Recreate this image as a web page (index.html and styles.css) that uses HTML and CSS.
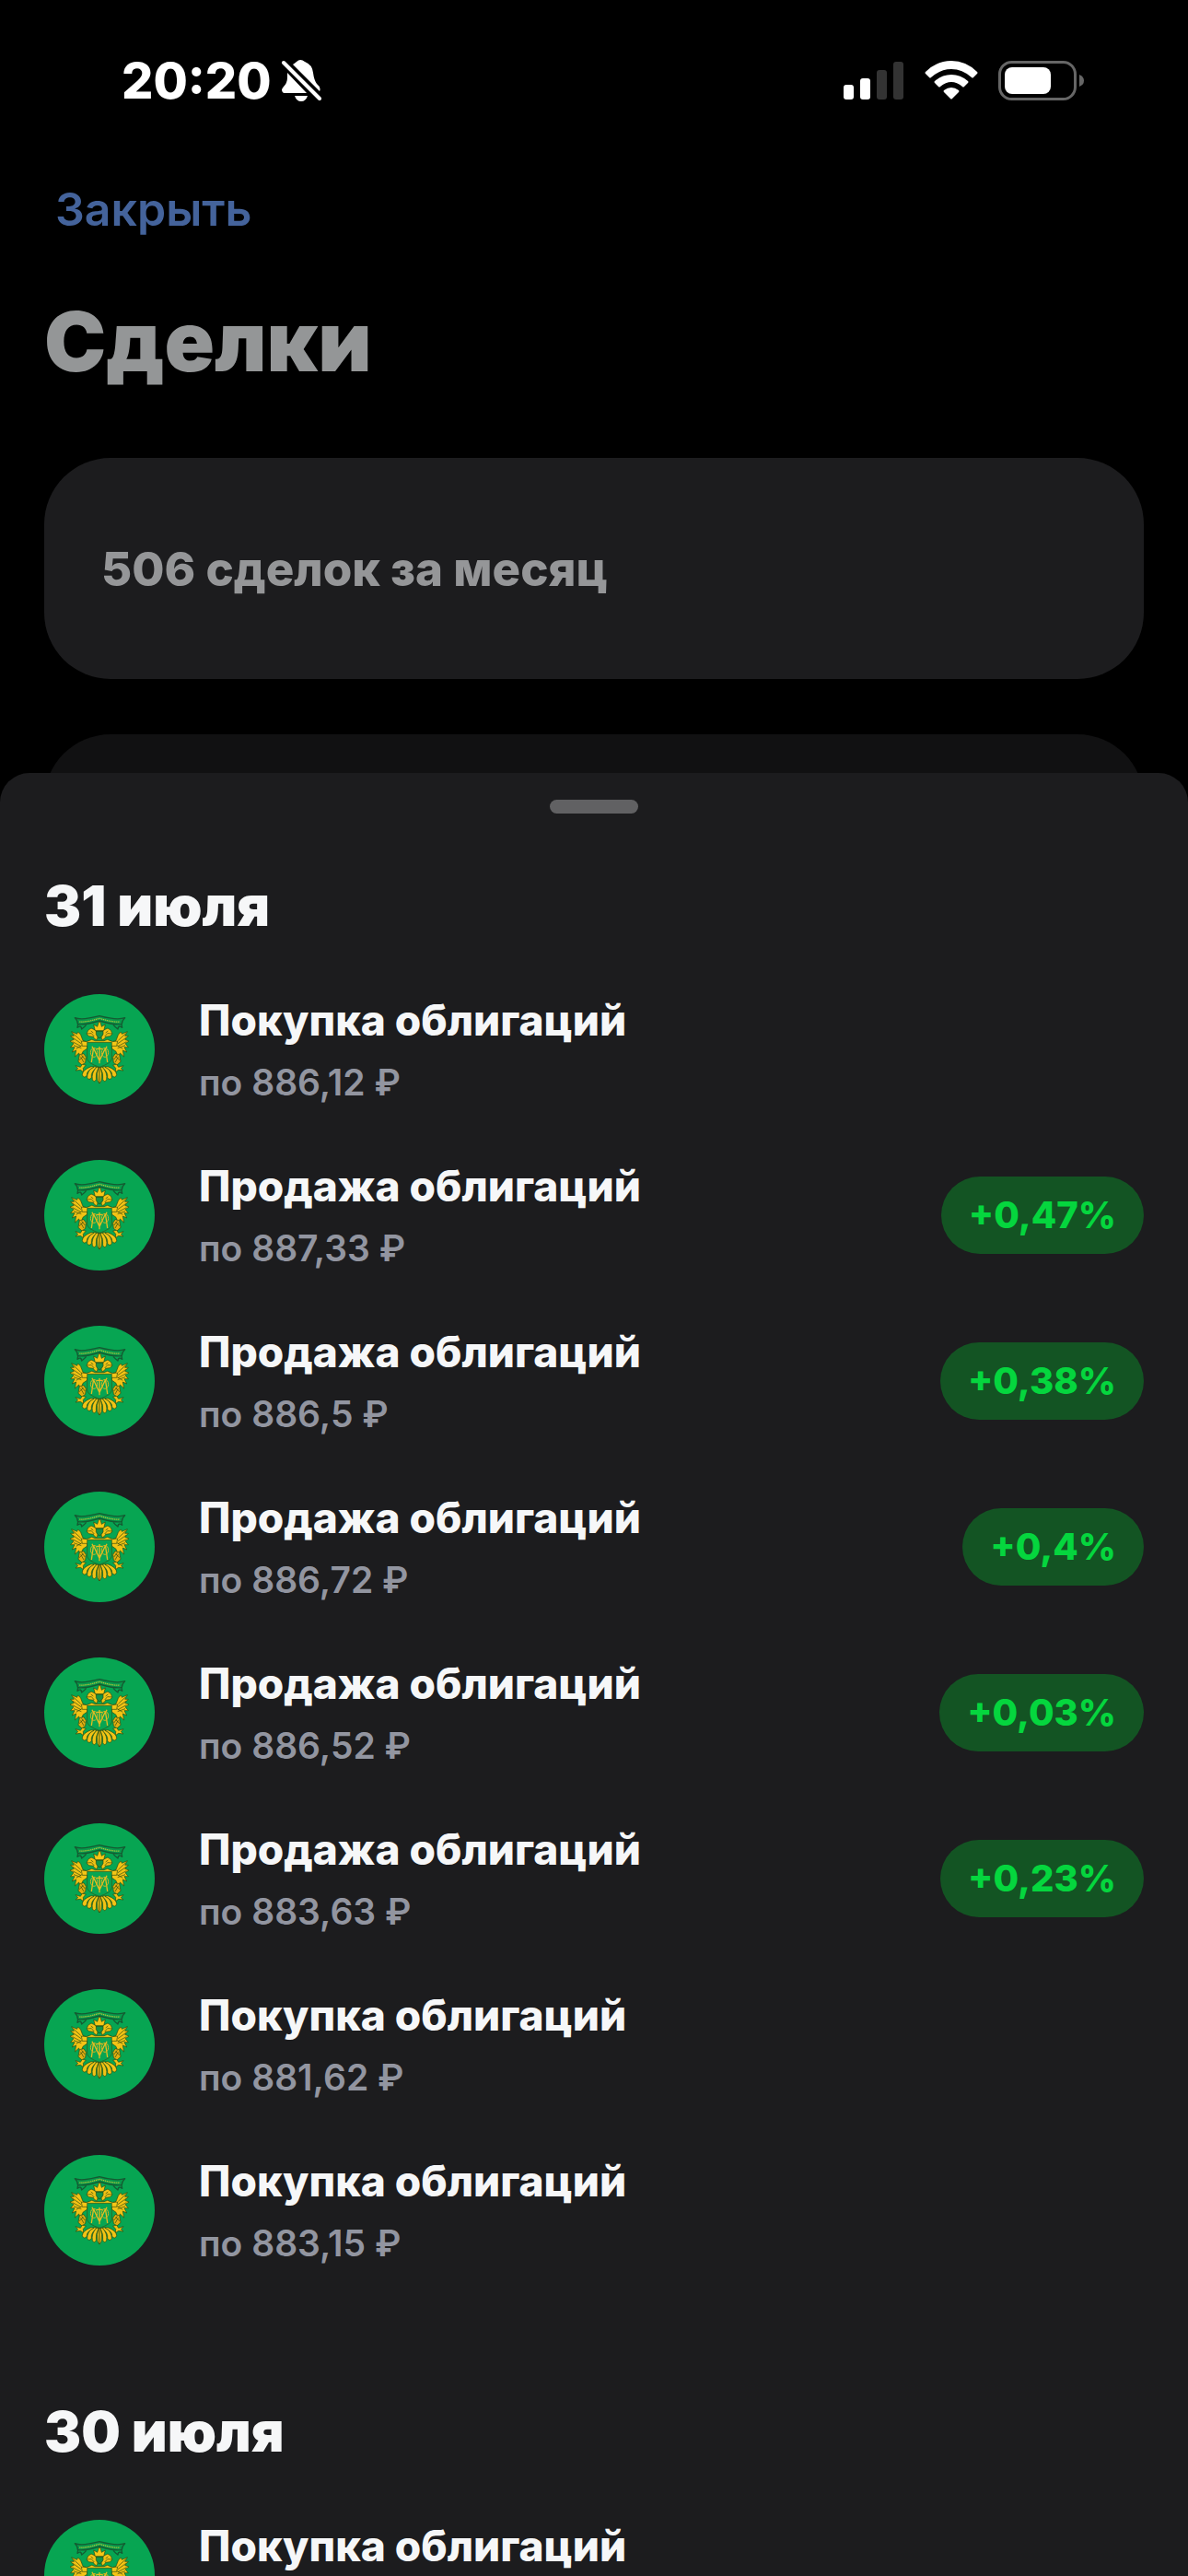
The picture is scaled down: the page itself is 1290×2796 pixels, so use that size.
FILE: index.html
```html
<!DOCTYPE html>
<html lang="ru">
<head>
  <meta charset="UTF-8">
  <meta name="viewport" content="width=device-width, initial-scale=1.0">
  <title>Сделки</title>
  <link rel="stylesheet" href="styles.css">
</head>
<body>
  <!-- Bond issuer emblem, reused in every row -->
  <svg class="sprite" width="0" height="0" aria-hidden="true">
    <defs>
      <g id="wing" stroke="#2b4a10" stroke-width="2" stroke-linejoin="round">
        <path fill="#f2c315" d="M164 183 L150 178 L143 160 Q139 151 133 151 L131 157 L113 149 L121 163 L110 163 L121 175 L108 180 L120 188 L110 200 L123 200 L115 216 L128 210 L124 231 L137 219 L142 236 L150 214 L164 204 Z"/>
        <path fill="none" d="M118 155 L143 178 M116 168 L144 188 M116 182 L144 197 M120 194 L145 203 M128 205 L147 194"/>
        <path fill="#f2c315" d="M196 176 Q188 176 184 166 L170 164 L162 157 L167 145 L177 138 L190 144 L200 158 Z"/>
        <path fill="none" d="M162 156 L178 155 L187 165 M176 147 L184 153"/>
        <path fill="#e2ae10" d="M139 224 L153 221 L160 232 L158 250 L147 258 L135 247 Z"/>
        <path fill="none" d="M143 232 L153 249 M138 242 L151 230 M146 226 L157 240"/>
        <path fill="#f2c315" d="M148 256 L142 265 L126 260 L134 269 L126 276 L142 274 L152 281 L151 268 L160 258 Z"/>
        <path fill="#f2c315" d="M201 265 Q193 284 198 309 L204 318 L204 265 Z"/>
        <path fill="#f2c315" d="M194 264 Q177 284 181 306 Q188 316 193 305 Q190 286 201 266 Z"/>
        <path fill="#f2c315" d="M185 263 Q163 277 164 300 Q172 309 178 298 Q175 282 195 265 Z"/>
        <path fill="#f2c315" d="M177 263 Q148 274 148 290 Q153 303 163 292 Q161 277 186 265 Z"/>
      </g>
      <symbol id="emblem" viewBox="24 27 360 360">
        <rect x="24" y="27" width="360" height="360" fill="#07a552"/>
        <g fill="#08984b" stroke="#145b32" stroke-width="4" stroke-linejoin="round">
          <path d="M124 104 Q146 113 204 98 Q262 113 287 104 Q277 113 277 124 Q258 130 204 114 Q150 130 133 124 Q133 112 124 104 Z"/>
          <path fill="none" d="M134 126 L132 136 Q145 127 146 141 Q157 132 161 127 M276 126 L278 136 Q265 127 264 141 Q253 132 249 127"/>
          <path fill="none" stroke="#a6c43a" stroke-dasharray="4 2" d="M139 117 Q157 120 204 106 Q251 120 270 117"/>
        </g>
        <use href="#wing"/>
        <use href="#wing" transform="translate(408 0) scale(-1 1)"/>
        <g stroke="#2b4a10" stroke-width="2" stroke-linejoin="round">
          <path fill="#f5c616" d="M190 146 L185 126 L197 133 L202 118 L207 118 L211 133 L223 126 L218 146 Z"/>
          <path fill="#129247" d="M193 148 H216 V158 Q212 167 204 171 Q196 167 193 158 Z"/>
          <path fill="#f5c616" d="M145 180 Q162 186 179 175 L190 179 H219 L230 175 Q247 186 263 180 L260 196 H148 Z"/>
          <path fill="#07a552" stroke="#3a5214" d="M164 184 H244 V237 Q243 252 204 265 Q165 252 164 237 Z"/>
        </g>
        <path fill="none" stroke="#e3bd21" stroke-width="4" d="M180 197 L184 207 L178 249 M184 202 L204 244 L224 202 M228 197 L224 207 L230 249 M193 205 H215 M204 198 V253"/>
        <ellipse fill="none" stroke="#d2b323" stroke-width="3" cx="186" cy="217" rx="11" ry="15"/>
        <ellipse fill="none" stroke="#d2b323" stroke-width="3" cx="222" cy="217" rx="11" ry="15"/>
      </symbol>
    </defs>
  </svg>

  <!-- Status bar -->
  <header class="status-bar">
    <div class="status-left">
      <span class="time">20:20</span>
      <svg class="bell" width="44" height="48" viewBox="0 0 44 48" fill="#fff">
        <path d="M13 6 Q16 4 17 3 Q21 -1 26 3 Q34 6 35 15 Q36 23 39 27 Q44 31 42 35 Z"/>
        <path d="M7 15 L28 37 H3 Q-1 34 3 30 Q7 26 7 20 Z"/>
        <path d="M15 40 H29 Q27 46 22 46 Q17 46 15 40 Z"/>
        <path d="M3 4 L42 43" stroke="#fff" stroke-width="4" stroke-linecap="round"/>
      </svg>
    </div>
    <div class="status-right">
      <svg width="66" height="44" viewBox="0 0 66 44">
        <rect x="0" y="26" width="11" height="16" rx="3" fill="#fff"/>
        <rect x="18" y="19" width="11" height="23" rx="3" fill="#fff"/>
        <rect x="36" y="10" width="11" height="32" rx="3" fill="#333"/>
        <rect x="54" y="1" width="11" height="41" rx="3" fill="#333"/>
      </svg>
      <svg width="58" height="44" viewBox="0 0 58 44" fill="#fff">
        <path d="M1 12 Q13 0 29 0 Q45 0 57 12 Q58 13 57 14 L53 18 Q52 19 51 18 Q41 9 29 9 Q17 9 7 18 Q6 19 5 18 L1 14 Q0 13 1 12 Z"/>
        <path d="M11 22 Q19 15 29 15 Q39 15 47 22 Q48 23 47 24 L43 28 Q42 29 41 28 Q35 23 29 23 Q23 23 17 28 Q16 29 15 28 L11 24 Q10 23 11 22 Z"/>
        <path d="M21 32 Q25 29 29 29 Q33 29 37 32 Q38 33 37 34 L30 41 Q29 42 28 41 L21 34 Q20 33 21 32 Z"/>
      </svg>
      <svg width="94" height="44" viewBox="0 0 94 44">
        <rect x="1.500" y="1.500" width="82" height="40" rx="13" fill="none" stroke="#666" stroke-width="3"/>
        <rect x="7" y="7" width="50" height="29" rx="8" fill="#fff"/>
        <path d="M88 15 Q93 17 93 21.500 Q93 26 88 28 Z" fill="#666"/>
      </svg>
    </div>
  </header>

  <!-- Deals screen behind the sheet -->
  <main class="screen">
    <button type="button" class="close-btn">Закрыть</button>
    <h1>Сделки</h1>
    <div class="card">506 сделок за месяц</div>
    <div class="card card-next"></div>
  </main>

  <!-- Bottom sheet -->
  <section class="sheet">
    <div class="grabber"></div>

    <h2>31 июля</h2>
    <ul class="deals">
      <li class="deal">
        <svg class="avatar"><use href="#emblem"/></svg>
        <div class="info">
          <div class="name">Покупка облигаций</div>
          <div class="price">по 886,12 ₽</div>
        </div>
      </li>
      <li class="deal">
        <svg class="avatar"><use href="#emblem"/></svg>
        <div class="info">
          <div class="name">Продажа облигаций</div>
          <div class="price">по 887,33 ₽</div>
        </div>
        <span class="badge">+0,47%</span>
      </li>
      <li class="deal">
        <svg class="avatar"><use href="#emblem"/></svg>
        <div class="info">
          <div class="name">Продажа облигаций</div>
          <div class="price">по 886,5 ₽</div>
        </div>
        <span class="badge">+0,38%</span>
      </li>
      <li class="deal">
        <svg class="avatar"><use href="#emblem"/></svg>
        <div class="info">
          <div class="name">Продажа облигаций</div>
          <div class="price">по 886,72 ₽</div>
        </div>
        <span class="badge">+0,4%</span>
      </li>
      <li class="deal">
        <svg class="avatar"><use href="#emblem"/></svg>
        <div class="info">
          <div class="name">Продажа облигаций</div>
          <div class="price">по 886,52 ₽</div>
        </div>
        <span class="badge">+0,03%</span>
      </li>
      <li class="deal">
        <svg class="avatar"><use href="#emblem"/></svg>
        <div class="info">
          <div class="name">Продажа облигаций</div>
          <div class="price">по 883,63 ₽</div>
        </div>
        <span class="badge">+0,23%</span>
      </li>
      <li class="deal">
        <svg class="avatar"><use href="#emblem"/></svg>
        <div class="info">
          <div class="name">Покупка облигаций</div>
          <div class="price">по 881,62 ₽</div>
        </div>
      </li>
      <li class="deal">
        <svg class="avatar"><use href="#emblem"/></svg>
        <div class="info">
          <div class="name">Покупка облигаций</div>
          <div class="price">по 883,15 ₽</div>
        </div>
      </li>
    </ul>

    <h2>30 июля</h2>
    <ul class="deals">
      <li class="deal">
        <svg class="avatar"><use href="#emblem"/></svg>
        <div class="info">
          <div class="name">Покупка облигаций</div>
        </div>
      </li>
    </ul>
  </section>
</body>
</html>
```
FILE: styles.css
```css
* {
  box-sizing: border-box;
}
body {
  font-family: Inter, "Liberation Sans", sans-serif;
  margin: 0;
  height: 100vh;
  overflow: hidden;
  background: #000;
  color: #f6f7f8;
}
svg {
  display: block;
  flex-shrink: 0;
}
.sprite {
  position: absolute;
}

/* Status bar */
.status-bar {
  display: flex;
  justify-content: space-between;
  align-items: center;
  padding: 56px 112px 0 132px;
  color: #fff;
}
.status-left {
  display: flex;
  align-items: center;
  gap: 10px;
}
.time {
  font-size: 54px;
  line-height: 64px;
  font-weight: 800;
}
.status-right {
  display: flex;
  align-items: center;
  gap: 22px;
}

/* Screen */
.screen {
  padding: 75px 48px 0;
}
.close-btn {
  display: block;
  padding: 0 12px;
  border: none;
  background: none;
  font-family: inherit;
  font-size: 50px;
  line-height: 64px;
  font-weight: 600;
  color: #44639b;
  cursor: pointer;
}
h1 {
  margin: 62px 0 76px;
  font-size: 90px;
  line-height: 100px;
  font-weight: 900;
  color: #949697;
}
.card {
  height: 240px;
  margin-bottom: 60px;
  padding: 0 62px;
  display: flex;
  align-items: center;
  border-radius: 72px;
  background: #1c1c1e;
  font-size: 51px;
  font-weight: 800;
  color: #959698;
}
.card-next {
  background: #111112;
}

/* Bottom sheet */
.sheet {
  position: fixed;
  top: 30vh;
  left: 0;
  right: 0;
  bottom: 0;
  overflow: hidden;
  padding: 29px 48px 0;
  border-radius: 32px 32px 0 0;
  background: #1c1c1e;
}
.grabber {
  width: 96px;
  height: 15px;
  margin: 0 auto;
  border-radius: 8px;
  background: #616163;
}
h2 {
  margin: 62px 0 58px;
  font-size: 60px;
  line-height: 76px;
  font-weight: 900;
}
.deals {
  list-style: none;
  margin: 0 0 142px;
  padding: 0;
  display: flex;
  flex-direction: column;
  gap: 60px;
}
.deal {
  display: flex;
  align-items: center;
  min-height: 120px;
}
.avatar {
  width: 120px;
  height: 120px;
  border-radius: 50%;
}
.info {
  flex: 1;
  align-self: flex-start;
  margin-left: 48px;
}
.name {
  font-size: 46px;
  line-height: 56px;
  font-weight: 800;
}
.price {
  margin-top: 16px;
  font-size: 39px;
  line-height: 48px;
  font-weight: 600;
  color: #9295a0;
}
.badge {
  padding: 0 30px;
  border-radius: 42px;
  background: #135423;
  font-size: 40px;
  line-height: 84px;
  font-weight: 800;
  color: #05d63e;
}
```
